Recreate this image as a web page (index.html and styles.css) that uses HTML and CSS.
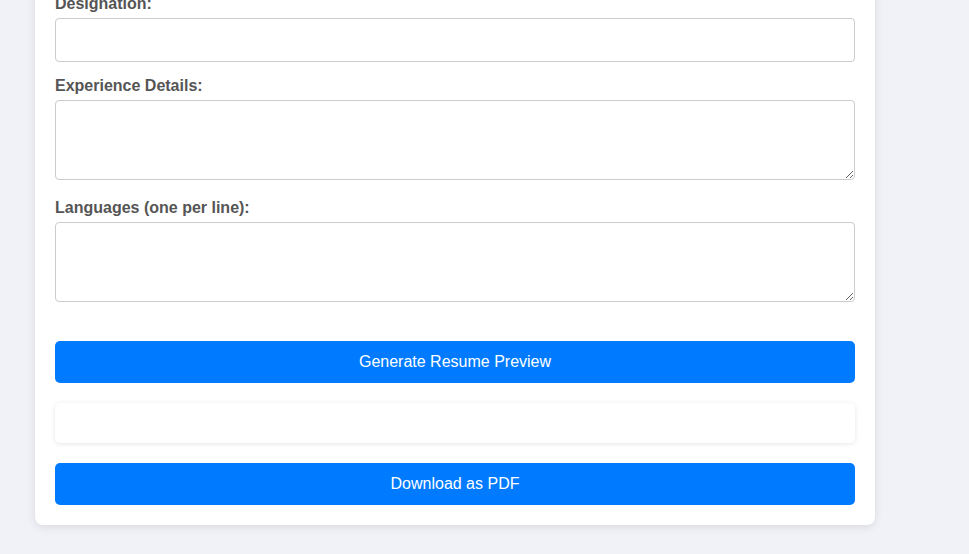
FILE: index.html
```html
<!DOCTYPE html>
<html>
<head>
<meta charset="utf-8">
<link rel="stylesheet" href="styles.css">
</head>
<body>
<div class="card">
  <label class="label">Designation:</label>
  <input class="input" type="text">
  <label class="label">Experience Details:</label>
  <textarea class="area"></textarea>
  <label class="label">Languages (one per line):</label>
  <textarea class="area"></textarea>
  <button class="btn btn-first">Generate Resume Preview</button>
  <div class="preview"></div>
  <button class="btn">Download as PDF</button>
</div>
</body>
</html>
```

FILE: styles.css
```css
html, body {
  margin: 0;
  padding: 0;
  background: #f0f2f7;
  font-family: "Liberation Sans", Arial, sans-serif;
}
body {
  height: 554px;
  overflow: hidden;
}
.card {
  box-sizing: border-box;
  width: 840px;
  margin: -25px 0 0 35px;
  padding: 20px 20px 20px;
  background: #fff;
  border-radius: 8px;
  box-shadow: 0 2px 10px rgba(0, 0, 0, 0.1);
  display: flex;
  flex-direction: column;
}
.label {
  display: block;
  font-size: 16px;
  line-height: 18px;
  font-weight: bold;
  color: #555;
  margin-bottom: 5px;
}
.input, .area {
  display: block;
  box-sizing: border-box;
  width: 800px;
  border: 1px solid #ccc;
  border-radius: 4px;
  padding: 10px;
  font-family: inherit;
  font-size: 16px;
  background: #fff;
  margin: 0;
}
.input {
  height: 44px;
  margin-bottom: 15px;
}
.area {
  height: 80px;
  margin-bottom: 19px;
  resize: vertical;
}
.btn {
  display: block;
  box-sizing: border-box;
  width: 800px;
  height: 42px;
  border: none;
  border-radius: 5px;
  background: #007bff;
  color: #fff;
  font-family: inherit;
  font-size: 16px;
  padding: 0;
  margin: 0;
}
.btn-first {
  margin-top: 20px;
}
.preview {
  height: 40px;
  margin: 20px 0;
  background: #fff;
  border-radius: 5px;
  box-shadow: 0 1px 5px rgba(0, 0, 0, 0.1);
}
```
